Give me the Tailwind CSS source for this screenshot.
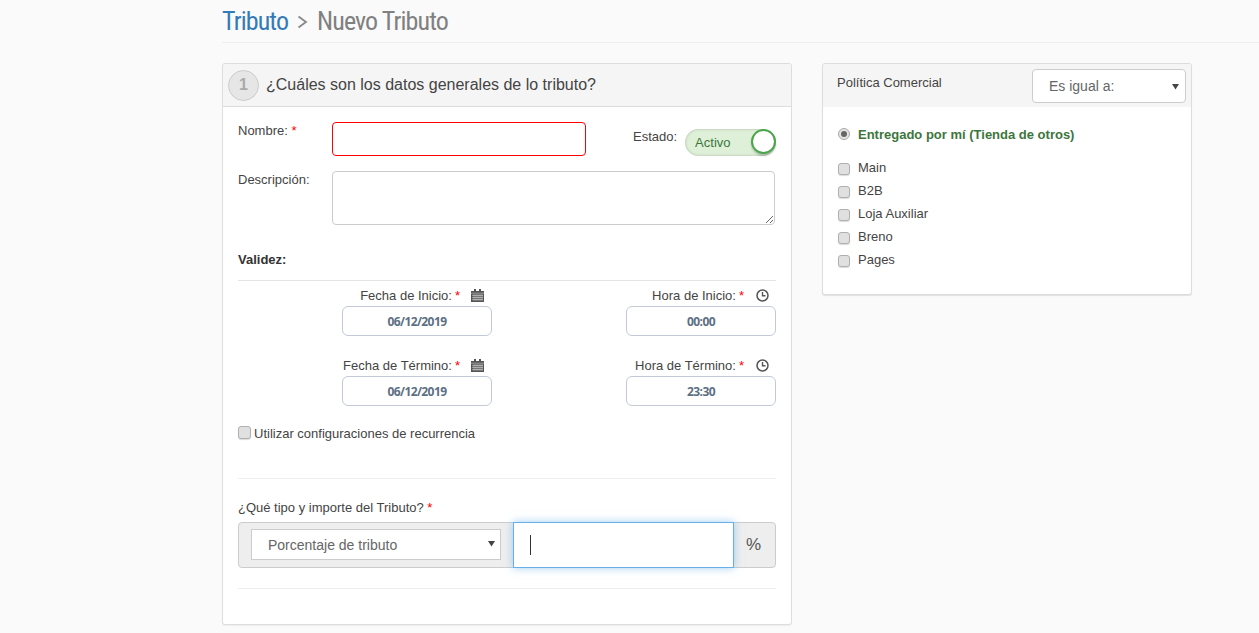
<!DOCTYPE html>
<html lang="es">
<head>
<meta charset="utf-8">
<title>Nuevo Tributo</title>
<script src="https://cdn.jsdelivr.net/npm/@tailwindcss/browser@4"></script>
</head>
<body class="bg-[#fafafa] font-['Liberation_Sans',Arial,sans-serif] text-[13px] text-[#444] h-[633px] overflow-hidden">
<div class="pl-[222px]">
  <header class="h-[43px] border-b border-[#eeeeee] flex items-center text-[26px] leading-none font-['Roboto',sans-serif] [font-stretch:condensed] tracking-[-0.9px]">
    <span class="text-[#337ab7]">Tributo</span>
    <svg class="mx-[9px] mt-[1px]" width="11" height="14" viewBox="0 0 11 14"><path d="M1.5 1.5l7.5 5.5-7.5 5.5" fill="none" stroke="#888" stroke-width="1.8"/></svg>
    <span class="text-[#808080]">Nuevo Tributo</span>
  </header>
  <div class="flex items-start gap-[30px] mt-[20px]">
    <section class="w-[570px] h-[562px] shrink-0 bg-white border border-[#dddddd] rounded-[3px] shadow-[0_1px_1px_rgba(0,0,0,.05)]">
      <div class="h-[43px] bg-[#f5f5f5] border-b border-[#dddddd] flex items-center pl-[5px] rounded-t-[3px]">
        <span class="w-[31px] h-[31px] rounded-full bg-[#e6e6e6] border border-[#cccccc] flex items-center justify-center text-[16px] font-bold text-[#aaaaaa]">1</span>
        <h2 class="ml-[7px] text-[16px] text-[#444]">¿Cuáles son los datos generales de lo tributo?</h2>
      </div>
      <div class="px-[15px]">
        <div class="flex mt-[15px] h-[34px]">
          <label class="w-[94px] shrink-0 pt-[1px] leading-[15px]">Nombre: <span class="text-[#f00]">*</span></label>
          <input class="w-[254px] shrink-0 h-[34px] bg-white border border-[#ff0000] rounded-[4px]" type="text" aria-label="Nombre">
          <label class="ml-[47px] shrink-0 mt-[7px] leading-[15px]">Estado:</label>
          <div class="ml-[8px] shrink-0 mt-[7px] relative w-[91px] h-[27px] rounded-full bg-[#dff0d8] shadow-[inset_0_0_3px_rgba(0,0,0,.25)] flex items-center pl-[10px] text-[#3c763d]">
            Activo
            <span class="absolute right-0 top-0 w-[25px] h-[25px] rounded-full bg-white border-2 border-[#4aa64a] shadow-[0_2px_2px_rgba(0,0,0,.2)]"></span>
          </div>
        </div>
        <div class="flex mt-[15px]">
          <label class="w-[94px] shrink-0 pt-[1px] leading-[15px]">Descripción:</label>
          <textarea class="w-[443px] h-[54px] bg-white border border-[#cccccc] rounded-[4px] block" aria-label="Descripción"></textarea>
        </div>
        <div class="mt-[27px] font-bold text-[#333] leading-[15px]">Validez:</div>
        <div class="mt-[13px] border-t border-[#e5e5e5]"></div>
        <div class="pl-[104px] mt-[7px] flex justify-between">
          <div class="w-[150px]">
            <div class="flex items-center justify-end pr-[8px] h-[15px] whitespace-nowrap">Fecha de Inicio: <span class="text-[#f00] ml-[3px]">*</span>
              <svg class="ml-[11px]" width="13" height="13" viewBox="0 0 13 13"><path fill="#555" d="M0 2h3V0h2v2h3V0h2v2h3v11H0z"/><path stroke="#fff" stroke-opacity=".7" stroke-width=".6" d="M0 4.2h13M1 6.5h11M1 8.5h11M1 10.5h11M3 5v7M5 5v7M7 5v7M9 5v7M11 5v7"/></svg>
            </div>
            <input class="mt-[3px] w-[150px] h-[30px] bg-white border border-[#c2cad8] rounded-[6px] text-center font-['Open_Sans',sans-serif] font-bold text-[12px] tracking-[-0.6px] text-[#5c6f84]" value="06/12/2019" aria-label="Fecha de Inicio">
          </div>
          <div class="w-[150px]">
            <div class="flex items-center justify-end pr-[7px] h-[15px] whitespace-nowrap">Hora de Inicio: <span class="text-[#f00] ml-[3px]">*</span>
              <svg class="ml-[12px]" width="13" height="13" viewBox="0 0 13 13"><circle cx="6.5" cy="6.5" r="5.5" fill="none" stroke="#555" stroke-width="1.5"/><path d="M6.5 3v3.7h3" fill="none" stroke="#555" stroke-width="1.4"/></svg>
            </div>
            <input class="mt-[3px] w-[150px] h-[30px] bg-white border border-[#c2cad8] rounded-[6px] text-center font-['Open_Sans',sans-serif] font-bold text-[12px] tracking-[-0.6px] text-[#5c6f84]" value="00:00" aria-label="Hora de Inicio">
          </div>
        </div>
        <div class="pl-[104px] mt-[22px] flex justify-between">
          <div class="w-[150px]">
            <div class="flex items-center justify-end pr-[8px] h-[15px] whitespace-nowrap">Fecha de Término: <span class="text-[#f00] ml-[3px]">*</span>
              <svg class="ml-[11px]" width="13" height="13" viewBox="0 0 13 13"><path fill="#555" d="M0 2h3V0h2v2h3V0h2v2h3v11H0z"/><path stroke="#fff" stroke-opacity=".7" stroke-width=".6" d="M0 4.2h13M1 6.5h11M1 8.5h11M1 10.5h11M3 5v7M5 5v7M7 5v7M9 5v7M11 5v7"/></svg>
            </div>
            <input class="mt-[3px] w-[150px] h-[30px] bg-white border border-[#c2cad8] rounded-[6px] text-center font-['Open_Sans',sans-serif] font-bold text-[12px] tracking-[-0.6px] text-[#5c6f84]" value="06/12/2019" aria-label="Fecha de Término">
          </div>
          <div class="w-[150px]">
            <div class="flex items-center justify-end pr-[7px] h-[15px] whitespace-nowrap">Hora de Término: <span class="text-[#f00] ml-[3px]">*</span>
              <svg class="ml-[12px]" width="13" height="13" viewBox="0 0 13 13"><circle cx="6.5" cy="6.5" r="5.5" fill="none" stroke="#555" stroke-width="1.5"/><path d="M6.5 3v3.7h3" fill="none" stroke="#555" stroke-width="1.4"/></svg>
            </div>
            <input class="mt-[3px] w-[150px] h-[30px] bg-white border border-[#c2cad8] rounded-[6px] text-center font-['Open_Sans',sans-serif] font-bold text-[12px] tracking-[-0.6px] text-[#5c6f84]" value="23:30" aria-label="Hora de Término">
          </div>
        </div>
        <label class="flex items-center mt-[20px] h-[15px]">
          <input type="checkbox" class="appearance-none w-[13px] h-[13px] mb-[3px] rounded-[3px] bg-[#e0e0e0] border border-[#b0b0b0] shadow-[0_1px_1px_rgba(0,0,0,.15)]">
          <span class="ml-[3px]">Utilizar configuraciones de recurrencia</span>
        </label>
        <div class="mt-[37px] border-t border-[#eeeeee]"></div>
        <div class="mt-[21px] leading-[15px]">¿Qué tipo y importe del Tributo? <span class="text-[#f00]">*</span></div>
        <div class="mt-[7px] h-[46px] w-[538px] bg-[#eeeeee] border border-[#cccccc] rounded-[4px] flex items-center relative">
          <div class="ml-[12px] mb-[2px] w-[250px] h-[31px] relative">
            <select class="appearance-none w-full h-full bg-white border border-[#cccccc] pl-[16px] pt-[2px] text-[14px] text-[#666]" aria-label="Tipo"><option>Porcentaje de tributo</option></select>
            <svg class="absolute right-[6px] top-[11px]" width="7" height="7" viewBox="0 0 7 7"><path d="M0 1h7L3.5 6.5z" fill="#444"/></svg>
          </div>
          <div class="absolute left-[274px] top-[-1px] w-[221px] h-[46px] bg-white border border-[#66afe9] shadow-[0_0_8px_rgba(102,175,233,.6)] flex items-center pl-[16px]">
            <span class="block w-[1px] h-[20px] bg-[#333]"></span>
          </div>
          <span class="absolute right-[14px] top-[12px] text-[17px] leading-[20px] text-[#555]">%</span>
        </div>
        <div class="mt-[20px] border-t border-[#eeeeee]"></div>
      </div>
    </section>
    <aside class="w-[370px] h-[232px] shrink-0 bg-white border border-[#dddddd] rounded-[3px] shadow-[0_1px_1px_rgba(0,0,0,.1)]">
      <div class="h-[43px] bg-[#f5f5f5] flex justify-between pl-[14px] pr-[5px] rounded-t-[3px]">
        <span class="mt-[11px] leading-[15px]">Política Comercial</span>
        <div class="mt-[5px] w-[154px] h-[34px] relative">
          <select class="appearance-none w-full h-full bg-white border border-[#cccccc] rounded-[4px] pl-[16px] text-[14px] text-[#666]" aria-label="Condición"><option>Es igual a:</option></select>
          <svg class="absolute right-[7px] top-[14px]" width="7" height="7" viewBox="0 0 7 7"><path d="M0 1h7L3.5 6.5z" fill="#444"/></svg>
        </div>
      </div>
      <div class="pl-[15px]">
        <label class="flex items-center mt-[20px] h-[16px]">
          <span class="w-[12px] h-[12px] rounded-full bg-[#e4e4e4] border border-[#aaaaaa] flex items-center justify-center mb-[3px]"><span class="w-[6px] h-[6px] rounded-full bg-[#666]"></span></span>
          <span class="ml-[8px] font-bold text-[#3c763d]">Entregado por mí (Tienda de otros)</span>
        </label>
        <ul class="mt-[17px] flex flex-col gap-[8px]">
          <li class="flex items-center h-[15px]"><span class="w-[12px] h-[12px] mt-[2px] rounded-[3px] bg-[#e0e0e0] border border-[#b0b0b0] shadow-[0_1px_1px_rgba(0,0,0,.15)]"></span><span class="ml-[8px]">Main</span></li>
          <li class="flex items-center h-[15px]"><span class="w-[12px] h-[12px] mt-[2px] rounded-[3px] bg-[#e0e0e0] border border-[#b0b0b0] shadow-[0_1px_1px_rgba(0,0,0,.15)]"></span><span class="ml-[8px]">B2B</span></li>
          <li class="flex items-center h-[15px]"><span class="w-[12px] h-[12px] mt-[2px] rounded-[3px] bg-[#e0e0e0] border border-[#b0b0b0] shadow-[0_1px_1px_rgba(0,0,0,.15)]"></span><span class="ml-[8px]">Loja Auxiliar</span></li>
          <li class="flex items-center h-[15px]"><span class="w-[12px] h-[12px] mt-[2px] rounded-[3px] bg-[#e0e0e0] border border-[#b0b0b0] shadow-[0_1px_1px_rgba(0,0,0,.15)]"></span><span class="ml-[8px]">Breno</span></li>
          <li class="flex items-center h-[15px]"><span class="w-[12px] h-[12px] mt-[2px] rounded-[3px] bg-[#e0e0e0] border border-[#b0b0b0] shadow-[0_1px_1px_rgba(0,0,0,.15)]"></span><span class="ml-[8px]">Pages</span></li>
        </ul>
      </div>
    </aside>
  </div>
</div>
</body>
</html>
